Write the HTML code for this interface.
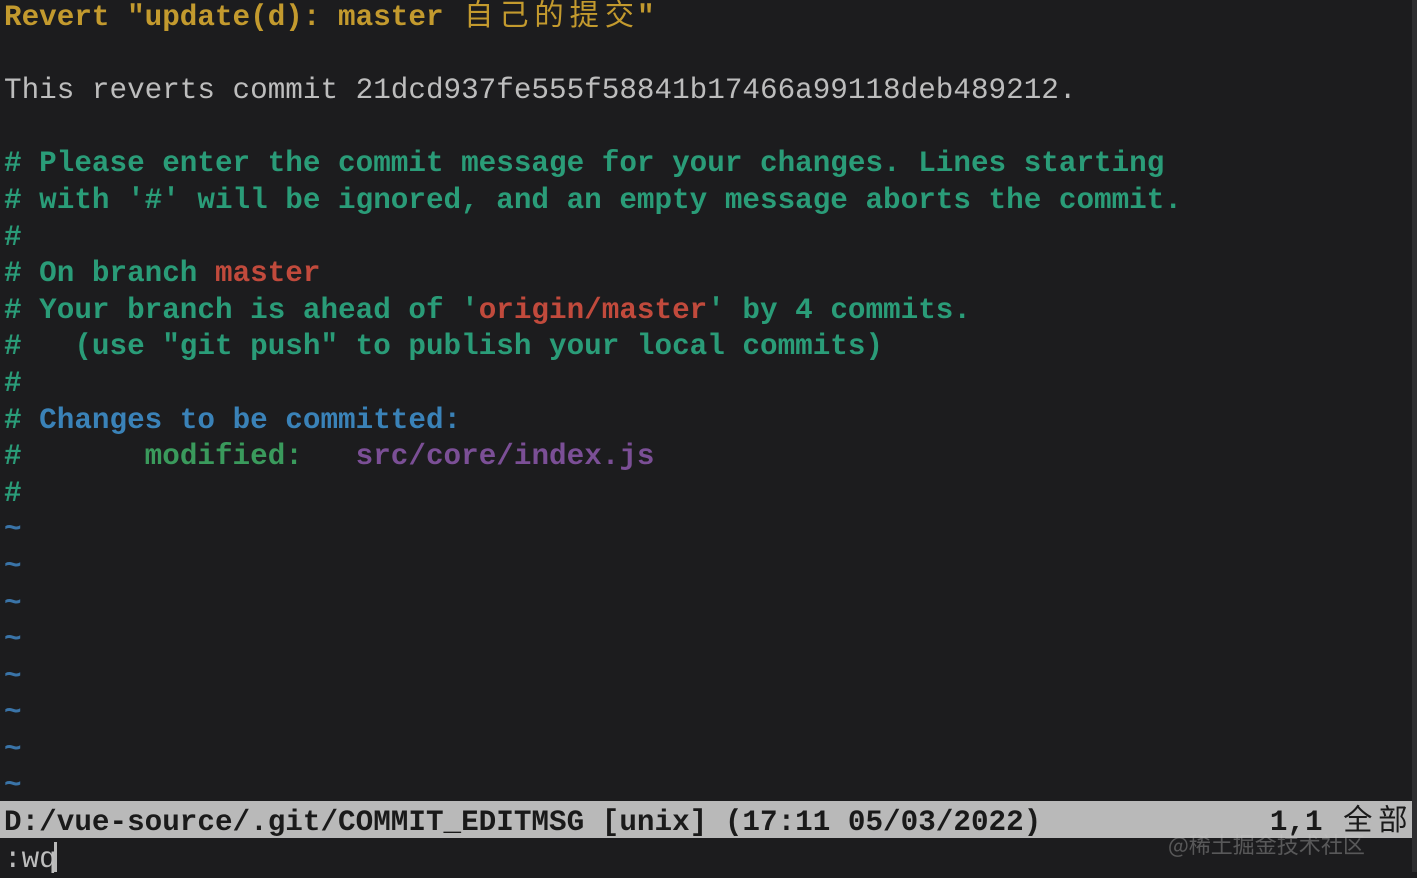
<!DOCTYPE html>
<html><head><meta charset="utf-8"><style>
html,body{margin:0;padding:0;background:#1c1c1e;width:1417px;height:872px;overflow:hidden}
.t{position:absolute;left:4px;top:0px;font-family:"Liberation Mono","Noto Sans CJK SC",monospace;font-size:29.3px;line-height:36.6px;color:#bdbdbd}
.l{height:36.6px;white-space:pre;overflow:visible}
.y{color:#c39a2e;font-weight:bold}
.g{color:#2a9c78;font-weight:bold}
.r{color:#c14a3c;font-weight:bold}
.b{color:#3a82b8;font-weight:bold}
.m{color:#3a9a5c;font-weight:bold}
.p{color:#7b4f96;font-weight:bold}
.til{color:#3a74a8;font-weight:bold}
.cj{display:inline-block;width:35.2px;text-align:center;font-weight:normal}
.st{position:absolute;left:0;top:801px;width:1412px;height:37px;background:#b9b9b9}
.sl{color:#1a1a1a;font-weight:bold}
.wm{position:absolute;left:1168px;top:828px;font-family:"Noto Sans CJK SC",sans-serif;font-size:22px;color:rgba(200,200,200,0.35)}
.edge{position:absolute;left:1412px;top:0;width:5px;height:872px;background:#2e2e30}
.cur{position:absolute;left:54px;top:842px;width:3px;height:30px;background:#b9b9b9}
</style></head><body>
<div class="st"></div>
<div class="edge"></div>
<div class="t"><div class="l y">Revert "update(d): master <span class="cj">自</span><span class="cj">己</span><span class="cj">的</span><span class="cj">提</span><span class="cj">交</span>"</div><div class="l"> </div><div class="l">This reverts commit 21dcd937fe555f58841b17466a99118deb489212.</div><div class="l"> </div><div class="l g"># Please enter the commit message for your changes. Lines starting</div><div class="l g"># with '#' will be ignored, and an empty message aborts the commit.</div><div class="l g">#</div><div class="l g"># On branch <span class="r">master</span></div><div class="l g"># Your branch is ahead of '<span class="r">origin/master</span>' by 4 commits.</div><div class="l g">#   (use "git push" to publish your local commits)</div><div class="l g">#</div><div class="l g"># <span class="b">Changes to be committed:</span></div><div class="l g">#       <span class="m">modified:   </span><span class="p">src/core/index.js</span></div><div class="l g">#</div><div class="l til">~</div><div class="l til">~</div><div class="l til">~</div><div class="l til">~</div><div class="l til">~</div><div class="l til">~</div><div class="l til">~</div><div class="l til">~</div><div class="l sl">D:/vue-source/.git/COMMIT_EDITMSG [unix] (17:11 05/03/2022)             1,1 <span class="cj">全</span><span class="cj">部</span></div><div class="l">:wq</div></div>
<div class="cur"></div>
<div class="wm">@稀土掘金技术社区</div>
</body></html>
